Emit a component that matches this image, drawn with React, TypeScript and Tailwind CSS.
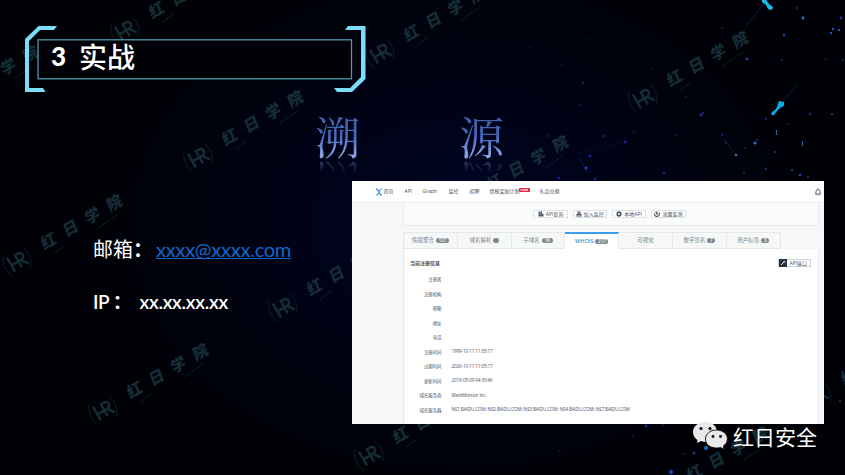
import React from "react";

const marks: [number, number][] = [
  [125, 30], [380, 53], [198, 157], [643, 98], [463, 202], [-67, 112],
  [17, 261], [283, 307], [103, 410], [369, 455], [663, 493], [817, 396],
];

const dots: [number, number, number, string][] = [
  [803, 18, 1.4, "#1c7fc4"], [797, 8, 1, "#123a8a"], [784, 35, 1.4, "#1640a8"], [747, 59, 1.3, "#2a48c8"],
  [782, 60, 1, "#142a80"], [833, 29, 1.2, "#1c58c0"], [831, 33, 1.2, "#1c58c0"], [839, 30, 1.2, "#1c58c0"],
  [841, 18, 1.4, "#123a9a"], [826, 59, 1, "#101c58"], [843, 60, 1.2, "#121e68"], [701, 115, 1.3, "#2434b0"],
  [703, 113, 0.9, "#1830a0"], [686, 97, 1, "#0f2070"], [755, 143, 1.5, "#3874c8"], [757, 140, 0.9, "#1640a0"],
  [736, 155, 1.3, "#4468b8"], [722, 135, 1.2, "#141c78"], [726, 143, 0.9, "#182484"], [745, 148, 1, "#161e68"],
  [810, 114, 1.2, "#1a2c90"], [832, 114, 1, "#38487c"], [788, 124, 1, "#121c58"], [766, 119, 1.1, "#12308a"],
  [775, 152, 1.1, "#1c3c80"], [766, 169, 1.1, "#1a3888"], [744, 173, 1.1, "#1a2c78"], [792, 170, 1.1, "#244ca8"],
  [800, 175, 1.3, "#1c489c"], [808, 177, 1.1, "#203c98"], [583, 83, 1.2, "#0c2c60"], [580, 105, 1, "#0c2054"],
  [603, 136, 1.3, "#101c70"], [625, 142, 1.5, "#1620a0"], [590, 156, 1.5, "#1220a8"], [586, 168, 1.5, "#1c44c8"],
  [547, 136, 1.3, "#101858"], [559, 178, 1.3, "#1020b0"], [595, 179, 1.3, "#1020a0"], [664, 173, 1.3, "#142480"],
  [676, 135, 1, "#141858"], [634, 132, 1, "#141858"], [530, 47, 1, "#081440"], [561, 65, 1, "#081440"],
  [587, 39, 1, "#081438"], [652, 69, 1, "#101850"], [722, 28, 1.2, "#0d184c"], [646, 426, 1.5, "#142c98"],
  [663, 425, 1, "#101c60"], [706, 448, 2, "#1c6ac0"], [694, 453, 1.6, "#123480"], [671, 472, 2, "#1450c8"],
  [684, 454, 1, "#102060"], [633, 436, 1, "#0c1850"], [559, 451, 1, "#0c1440"], [840, 401, 1, "#20304c"],
];

function Watermark({ x, y }: { x: number; y: number }) {
  return (
    <g transform={`translate(${x} ${y})`} fill="none" stroke="#152d36">
      <g transform="rotate(-30)">
        <path d="M-9 -12Q-17 -3 -12 11M12 -9Q17 1 9 12" strokeWidth=".6" />
        <path d="M-7 -8V8M-7 1H2M1 8V-6H4Q8 -6 8 -3Q8 1 4 1H1M4 1L9 8" strokeWidth="2.4" />
        <path d="M36 12L50 10M86 12L110 10" strokeWidth=".6" />
        <text x="29.5" y="4" fontSize="15.5" fontWeight="900" letterSpacing="9.8" transform="skewX(-8)" fill="#152d36" stroke="none" className="font-['Noto_Sans_CJK_SC',sans-serif]">红日学院</text>
      </g>
    </g>
  );
}

function Backdrop() {
  return (
    <svg className="absolute inset-0" width="845" height="475" viewBox="0 0 845 475">
      <defs>
        <radialGradient id="glow" gradientUnits="userSpaceOnUse" cx="0" cy="0" r="1" gradientTransform="translate(455 225) scale(360 270)">
          <stop offset="0" stopColor="#000526" />
          <stop offset=".35" stopColor="#00031a" />
          <stop offset=".75" stopColor="#00020d" />
          <stop offset="1" stopColor="#000106" />
        </radialGradient>
      </defs>
      <rect width="845" height="475" fill="url(#glow)" />
      {marks.map(([x, y]) => <Watermark key={`${x}-${y}`} x={x} y={y} />)}
      <g stroke="#0c2266" strokeWidth="1">
        <path d="M764 3L744 29M781 104L797 84M579 158L588 173M724 139L736 155" opacity=".7" />
        <path d="M575 154L625 142" opacity=".3" />
      </g>
      {dots.map(([x, y, r, c]) => <circle key={`${x}-${y}`} cx={x} cy={y} r={r} fill={c} />)}
      <path d="M762 -1L766 0L769 4L773 7L772 10L768 9L766 5L762 2Z" fill="#18bdf0" />
      <path d="M779 101L784 102L784 106L780 108L777 111L774 115L771 115L772 112L776 109Z" fill="#0ca8e8" />
      <g stroke="#2a6690" strokeWidth="1.2"><path d="M776.500 130V135M802.500 141V146M803 17V20" /></g>
    </svg>
  );
}

function Title() {
  return (
    <header className="relative ml-[25px] mt-[26px] h-[67px] w-[341px]">
      <svg className="absolute inset-0" width="341" height="67" viewBox="0 0 341 67">
        <rect x="13" y="13.800" width="313.500" height="39" fill="#000006" stroke="#4b99a8" strokeWidth="1.300" />
        <path d="M13.500 0H32L29 4H15L4 15V62H18L20.500 66H0V13Z" fill="#7addfa" />
        <path d="M323 0H340.500V53L327 66H312L309 62H325L336 51V4H320Z" fill="#7addfa" />
      </svg>
      <h1 className="relative flex items-center pl-[26px] pt-[11px] text-white">
        <span className="w-[28px] font-['Lato',sans-serif] text-[26px] leading-[38px] font-black">3</span>
        <span className="font-['Noto_Sans_CJK_SC',sans-serif] text-[28px] leading-[38px] font-medium">实战</span>
      </h1>
    </header>
  );
}

function Glyph({ children }: { children: string }) {
  return (
    <div className="relative h-[56px] w-[44px] font-['Noto_Serif_CJK_SC','Noto_Sans_CJK_SC',serif] text-[45px] leading-[56px]">
      <span className="block w-[45px] bg-linear-to-b from-[#3f5c99] via-[#4469bd] to-[#a8baf0] bg-clip-text text-transparent">{children}</span>
      <span aria-hidden="true" className="absolute top-[48px] left-0 block w-[45px] -scale-y-100 bg-linear-to-t from-[#3c5288] from-0% to-transparent to-30% bg-clip-text text-transparent">{children}</span>
    </div>
  );
}

const nav = [
  ["首页", "w-[21px]"], ["API", "w-[18px]"], ["Graph", "w-[26px]"], ["监控", "w-[21px]"],
  ["招聘", "w-[20px]"], ["情报奖励计划", "w-[50px]"], ["礼品兑换", "w-[30px]"],
];

const tabs = [
  ["情报聚合", "127"], ["域名解析", ""], ["子域名", "10"], ["WHOIS", "217"],
  ["可视化", "-"], ["数字签名", "7"], ["用户标签", "3"],
];

const rows = [
  ["注册者", ""], ["注册机构", ""], ["邮箱", ""], ["地址", ""], ["电话", ""],
  ["注册时间", "1999-10-11 11:05:17"], ["过期时间", "2026-10-11 11:05:17"], ["更新时间", "2019-05-09 04:30:46"],
  ["域名服务商", "MarkMonitor Inc."],
  ["域名服务器", "NS1.BAIDU.COM; NS2.BAIDU.COM; NS3.BAIDU.COM; NS4.BAIDU.COM; NS7.BAIDU.COM"],
];

function ActionIcon({ kind }: { kind: number }) {
  return (
    <svg width="6" height="6" viewBox="0 0 12 12" fill="#4a5666">
      {kind === 0 && <path d="M1 1H8V6H11V11H7L6 9V11H1ZM3 3V4H6V3ZM3 6V7H6V6Z" fillRule="evenodd" />}
      {kind === 1 && <path d="M3 1H9V6H11V11H1V6H3ZM5 3V5H7V3ZM3 8V9H9V8Z" fillRule="evenodd" />}
      {kind === 2 && <path d="M6 0L11 3V9L6 12L1 9V3ZM6 4A2 2 0 106 8A2 2 0 106 4Z" fillRule="evenodd" />}
      {kind === 3 && <path d="M1 5A5 5 0 1010 3M3 2L6 6L6 1" fill="none" stroke="#4a5666" strokeWidth="2.200" />}
    </svg>
  );
}

function Screenshot() {
  return (
    <section className="flex h-[242.500px] w-[472px] flex-col overflow-hidden bg-[#f6f8f8] font-['Open_Sans','Noto_Sans_CJK_SC',sans-serif] text-[#46505e]">
      <nav className="flex h-[22px] shrink-0 items-center border-b border-[#e9ebec] bg-white pl-[22.500px] text-[5px]">
        <svg className="mr-px" width="8" height="8" viewBox="0 0 16 16" fill="none" strokeWidth="3">
          <path d="M2 2Q5 1 8 8Q11 15 14 14" stroke="#3f8fe4" />
          <path d="M14 2Q11 1 8 8Q5 15 2 14" stroke="#55b4ee" />
        </svg>
        {nav.map(([label, width]) => (
          <span key={label} className={`flex shrink-0 items-center leading-none whitespace-nowrap ${width}`}>
            {label}
            {label === "情报奖励计划" && (
              <span className="mb-[3px] -ml-[0.500px] flex h-[4px] w-[10.500px] shrink-0 items-center justify-center rounded-[1px] bg-[#e2243f] text-[3.500px] leading-none font-bold text-white">new</span>
            )}
          </span>
        ))}
        <svg className="mr-[2px] ml-auto" width="8" height="8" viewBox="0 0 16 16" fill="none" stroke="#39414c" strokeWidth="1.600">
          <path d="M2 12H14M4 12V7Q4 3 8 3Q12 3 12 7V12M7 14.500H9M8 1V3" />
        </svg>
      </nav>
      <div className="ml-[51px] flex w-[416px] flex-1 flex-col">
        <div className="flex h-[23px] shrink-0 items-center justify-center gap-[4.800px] border border-t-0 border-[#e9ebec] bg-[#fafbfb] pr-[3px]">
          {["API查询", "加入监控", "本地API", "流量监测"].map((label, i) => (
            <span key={label} className="flex h-[8.500px] w-[34.500px] items-center justify-center gap-[2px] border border-[#dfe3e8] bg-white text-[5px] leading-none whitespace-nowrap">
              <ActionIcon kind={i} />{label}
            </span>
          ))}
        </div>
        <div className="mt-[6px] flex h-[17px] shrink-0 border-l border-[#e6e9eb] text-[5.500px] text-[#7c858e]">
          {tabs.map(([label, count]) => {
            const active = label === "WHOIS";
            return (
              <span key={label} className={`flex w-[53.800px] items-center justify-center gap-[2px] whitespace-nowrap border-r border-[#e6e9eb] ${active ? "border-t-2 border-t-[#3f9ce6] bg-white font-semibold text-[#348fe0]" : "border-t border-b border-[#e6e9eb]"}`}>
                {label}
                {count !== "-" && (
                  <span className={`flex h-[5.600px] items-center justify-center rounded-full bg-[#7e8891] text-[4.500px] leading-none font-bold text-[#e4e7e9] ${count.length === 3 ? "w-[13px]" : count.length === 2 ? "w-[11px]" : count ? "w-[8px]" : "w-[5.600px]"}`}>{count}</span>
                )}
              </span>
            );
          })}
        </div>
        <div className="flex flex-1 flex-col border-x border-[#e6e9eb] bg-white">
          <div className="mt-[7px] flex h-[14px] items-center justify-between pr-[7px] pl-[6px]">
            <h2 className="text-[5px] leading-none font-bold">当前注册信息</h2>
            <span className="flex h-[8px] w-[33px] items-center border border-[#cdd3da] text-[5px] leading-none">
              <span className="mr-[2.500px] flex h-[8px] w-[8px] shrink-0 items-center justify-center bg-[#26323f]">
                <svg width="6" height="6" viewBox="0 0 12 12" stroke="#fff" strokeWidth="1.800"><path d="M2 10L10 2M7 2L10 5" /></svg>
              </span>
              <span className="whitespace-nowrap">API接口</span>
            </span>
          </div>
          <dl className="pt-[2px] text-[4.400px] leading-none">
            {rows.map(([label, value]) => (
              <div key={label} className="flex h-[14.500px] items-center whitespace-nowrap">
                <dt className="w-[37.500px] text-right">{label}</dt>
                <dd className="ml-[10px] text-[4.600px] tracking-[-0.120px]">{value}</dd>
              </div>
            ))}
          </dl>
        </div>
      </div>
    </section>
  );
}

function Brand() {
  return (
    <div className="absolute top-[421px] left-[692px] flex items-center">
      <svg width="37" height="30" viewBox="0 0 37 30">
        <path d="M13 1C6 1 1 5.500 1 11C1 14.500 2.700 17 5.500 19L5 22L9 20Q11 21 14 21C20 21 25 17 25 11C25 5 20 1 13 1Z" fill="#e9e9e9" />
        <path d="M24.500 9C18 9 13.500 13 13.500 18C13.500 23.500 18 27 24.500 27Q27 27 28.500 26.400L32 28.500L31.500 25Q35.500 22 35.500 18C35.500 13 31 9 24.500 9Z" fill="#e9e9e9" stroke="#05070d" strokeWidth=".9" />
        <g fill="#05070d"><circle cx="9" cy="7.500" r="1.600" /><circle cx="18" cy="7.500" r="1.600" /><circle cx="21" cy="15.500" r="1.400" /><circle cx="28.500" cy="15.500" r="1.400" /></g>
      </svg>
      <span className="ml-[4px] font-['Noto_Sans_CJK_SC',sans-serif] text-[21px] leading-[30px] text-white">红日安全</span>
    </div>
  );
}

export default function App() {
  return (
    <div className="relative flow-root h-[475px] w-[845px] overflow-hidden bg-black">
      <Backdrop />
      <Title />
      <div className="relative mt-[15px] ml-[315px] flex h-[73px] gap-[100px]">
        <Glyph>溯</Glyph>
        <Glyph>源</Glyph>
      </div>
      <main className="relative flex">
        <div className="flex w-[352px] flex-col gap-[25px] pt-[54px] pl-[93px] text-[20px] leading-[28px] text-white">
          <p className="flex whitespace-nowrap">
            <span className="w-[63px] font-['Noto_Sans_CJK_SC',sans-serif]">邮箱<b>：</b></span>
            <a className="h-[24px] border-b border-[#1268c8] font-['Lato',sans-serif] tracking-[-0.25px] text-[#1268c8]">xxxx@xxxx.com</a>
          </p>
          <p className="flex font-['Lato','Noto_Sans_CJK_SC',sans-serif] text-[19px] leading-[27px] font-semibold whitespace-nowrap">
            <span className="w-[46.500px] tracking-[-0.5px]">IP ：</span>
            <span className="tracking-[-0.25px]">xx.xx.xx.xx</span>
          </p>
        </div>
        <Screenshot />
      </main>
      <Brand />
    </div>
  );
}
